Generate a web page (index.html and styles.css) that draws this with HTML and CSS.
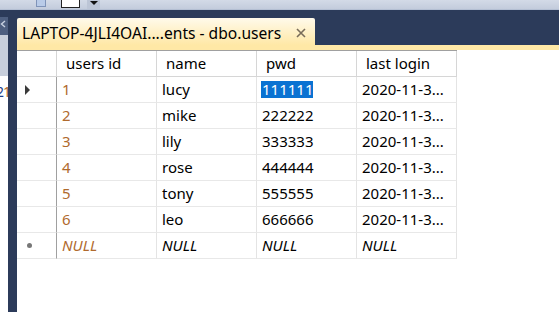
FILE: index.html
```html
<!DOCTYPE html>
<html lang="en">
<head>
    <meta charset="UTF-8">
    <title>dbo.users</title>
    <link rel="stylesheet" href="styles.css">
</head>
<body>
    <div class="toolbar">
        <span class="tb-icon"></span>
        <span class="tb-box"></span>
        <span class="tb-drop"><span class="tb-arrow"></span></span>
    </div>

    <div class="workspace">
        <div class="side-panel">
            <div class="side-head">
                <svg width="8" height="10" viewBox="0 0 8 10"><path d="M5 2 L1.5 5 L5 8" fill="none" stroke="#c9d2e2" stroke-width="1.4"/></svg>
            </div>
            <div class="side-gray"></div>
            <div class="side-body"><span class="side-num"><span class="side-two">2</span>1</span></div>
        </div>

        <div class="doc">
            <div class="tab-strip">
                <div class="tab">
                    <span class="tab-title">LAPTOP-4JLI4OAI....ents - dbo.users</span>
                    <svg class="tab-close" width="10" height="10" viewBox="0 0 10 10">
                        <path d="M1 1 L9 9 M9 1 L1 9" stroke="#786c5a" stroke-width="1.6"/>
                    </svg>
                </div>
            </div>
            <div class="tab-line"></div>

            <div class="doc-body">
                <div class="grid">
                    <div class="cell head rowhead"></div>
                    <div class="cell head">users id</div>
                    <div class="cell head">name</div>
                    <div class="cell head">pwd</div>
                    <div class="cell head">last login</div>

                    <div class="cell rowhead"><span class="current"></span></div>
                    <div class="cell id">1</div>
                    <div class="cell">lucy</div>
                    <div class="cell"><span class="selected">111111</span></div>
                    <div class="cell">2020-11-3...</div>

                    <div class="cell rowhead"></div>
                    <div class="cell id">2</div>
                    <div class="cell">mike</div>
                    <div class="cell">222222</div>
                    <div class="cell">2020-11-3...</div>

                    <div class="cell rowhead"></div>
                    <div class="cell id">3</div>
                    <div class="cell">lily</div>
                    <div class="cell">333333</div>
                    <div class="cell">2020-11-3...</div>

                    <div class="cell rowhead"></div>
                    <div class="cell id">4</div>
                    <div class="cell">rose</div>
                    <div class="cell">444444</div>
                    <div class="cell">2020-11-3...</div>

                    <div class="cell rowhead"></div>
                    <div class="cell id">5</div>
                    <div class="cell">tony</div>
                    <div class="cell">555555</div>
                    <div class="cell">2020-11-3...</div>

                    <div class="cell rowhead"></div>
                    <div class="cell id">6</div>
                    <div class="cell">leo</div>
                    <div class="cell">666666</div>
                    <div class="cell">2020-11-3...</div>

                    <div class="cell rowhead"><span class="new-row"></span></div>
                    <div class="cell id null">NULL</div>
                    <div class="cell null">NULL</div>
                    <div class="cell null">NULL</div>
                    <div class="cell null">NULL</div>
                </div>
            </div>
        </div>
    </div>
</body>
</html>
```

FILE: styles.css
```css
* {
    box-sizing: border-box;
}
body {
    margin: 0;
    width: 559px;
    height: 312px;
    overflow: hidden;
    font-family: "Noto Sans", "Open Sans", sans-serif;
    font-size: 15px;
    color: #000;
    background: #2c3b5a;
}

/* toolbar at the very top, cut off */
.toolbar {
    height: 10px;
    background: linear-gradient(#d3dae7, #c3ccdc);
    position: relative;
    border-bottom: 1px solid #b4bfd3;
}
.tb-icon {
    position: absolute;
    left: 36px;
    top: 0;
    width: 10px;
    height: 7px;
    border: 1px solid #7f93b8;
    border-top: none;
    background: #b9cbe8;
}
.tb-box {
    position: absolute;
    left: 61px;
    top: 0;
    width: 19px;
    height: 8px;
    background: #fff;
    border: 1px solid #222;
    border-top: none;
}
.tb-drop {
    position: absolute;
    left: 87px;
    top: 0;
    width: 13px;
    height: 9px;
    background: #bcc5d6;
}
.tb-arrow {
    position: absolute;
    left: 3px;
    top: 1px;
    border-left: 4px solid transparent;
    border-right: 4px solid transparent;
    border-top: 4px solid #111;
}

.workspace {
    display: flex;
    height: 302px;
    background: #2c3b5a;
}

/* partial object explorer on the left */
.side-panel {
    width: 8px;
    margin-top: 7px;
    display: flex;
    flex-direction: column;
    overflow: hidden;
}
.side-head {
    height: 18px;
    background: #4e5f80;
    padding-top: 2px;
}
.side-head svg {
    display: block;
}
.side-gray {
    height: 41px;
    background: #c8cfdc;
}
.side-body {
    flex: 1;
    background: #fff;
    padding-top: 5px;
    white-space: nowrap;
}
.side-num {
    display: inline-block;
    margin-left: -4px;
    color: #b06a2e;
    font-size: 14px;
    letter-spacing: -1px;
}
.side-two {
    color: #1d3f8a;
}

.doc {
    margin-left: 9px;
    flex: 1;
    display: flex;
    flex-direction: column;
}
.tab-strip {
    padding-top: 8px;
    height: 35px;
}
.tab {
    width: 298px;
    height: 27px;
    background: linear-gradient(#fffaeb, #ffe8a6);
    border-radius: 2px 2px 0 0;
    display: flex;
    align-items: center;
    padding-left: 5px;
    padding-top: 2px;
}
.tab-title {
    font-size: 15.6px;
    white-space: nowrap;
}
.tab-close {
    margin-left: 15px;
    margin-top: 1px;
}
.tab-line {
    height: 5px;
    background: #ffe8a6;
}

.doc-body {
    flex: 1;
    background: #fff;
}
.grid {
    display: grid;
    grid-template-columns: 40px repeat(4, 100px);
    grid-template-rows: 26px;
    grid-auto-rows: 26px;
    width: 440px;
    border-top: 1px solid #a0a0a0;
}
.cell {
    border-right: 1px solid #e4e4e4;
    border-bottom: 1px solid #e8e8e8;
    line-height: 25px;
    padding-left: 5px;
    white-space: nowrap;
    overflow: hidden;
}
.cell.head {
    padding-left: 9px;
    line-height: 24px;
    border-bottom-color: #d6d6d6;
    border-right-color: #d6d6d6;
}
.cell.rowhead {
    border-right-color: #a0a0a0;
    position: relative;
}
.cell.head.rowhead {
    border-right-color: #d6d6d6;
}
.id {
    color: #b06a2e;
}
.null {
    font-style: italic;
}
.selected {
    background: #0a72d2;
    color: #fff;
    padding: 0 0 0 1px;
    margin-left: -1px;
    display: inline-block;
    line-height: 17px;
}
.current {
    position: absolute;
    left: 8px;
    top: 8px;
    width: 0;
    height: 0;
    border-top: 5px solid transparent;
    border-bottom: 5px solid transparent;
    border-left: 5px solid #3a3a3a;
}
.new-row {
    position: absolute;
    left: 10px;
    top: 10px;
    width: 5px;
    height: 5px;
    border-radius: 50%;
    background: #777;
}
```
